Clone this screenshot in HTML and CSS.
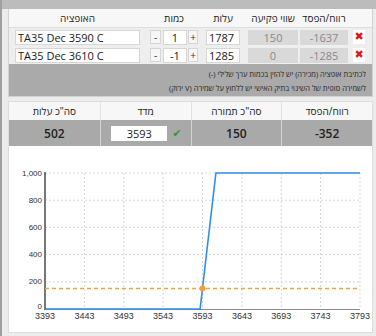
FILE: index.html
```html
<html lang="he">

<head>
    <meta charset="UTF-8">
    <meta name="viewport" content="width=device-width, initial-scale=1.0">
    <title>Options</title>
    <link rel="stylesheet" href="styles.css">
</head>

<body>
    <div class="top-strip"></div>
    <div class="options" dir="rtl">
        <div class="row head">
            <span class="c-del"></span>
            <span class="c-pl">רווח/הפסד</span>
            <span class="c-exp">שווי פקיעה</span>
            <span class="c-cost">עלות</span>
            <span class="c-qty">כמות</span>
            <span class="c-opt">האופציה</span>
        </div>
        <div class="row">
            <button class="c-del del">&#10006;</button>
            <span class="c-pl box" dir="ltr">-1637</span>
            <span class="c-exp box" dir="ltr">150</span>
            <input class="c-cost inp" type="text" value="1787" dir="ltr">
            <span class="c-qty qty">
                <button class="pm">+</button>
                <input class="inp num" type="text" value="1" dir="ltr">
                <button class="pm">-</button>
            </span>
            <input class="c-opt inp" type="text" value="TA35 Dec 3590 C" dir="ltr">
        </div>
        <div class="row">
            <button class="c-del del">&#10006;</button>
            <span class="c-pl box" dir="ltr">-1285</span>
            <span class="c-exp box" dir="ltr">0</span>
            <input class="c-cost inp" type="text" value="1285" dir="ltr">
            <span class="c-qty qty">
                <button class="pm">+</button>
                <input class="inp num" type="text" value="-1" dir="ltr">
                <button class="pm">-</button>
            </span>
            <input class="c-opt inp" type="text" value="TA35 Dec 3610 C" dir="ltr">
        </div>
        <div class="notes">
            <p>לכתיבת אופציה (מכירה) יש להזין בכמות ערך שלילי (-)</p>
            <p>לשמירה סופית של השינוי בתיק האישי יש ללחוץ על שמירה (V ירוק)</p>
        </div>
    </div>

    <div class="summary">
        <div class="sum-table" dir="rtl">
            <div class="sum-head">רווח/הפסד</div>
            <div class="sum-head">סה"כ תמורה</div>
            <div class="sum-head">מדד</div>
            <div class="sum-head">סה"כ עלות</div>
            <div class="sum-val" dir="ltr">-352</div>
            <div class="sum-val">150</div>
            <div class="sum-val index">
                <span class="check">&#10004;</span>
                <input class="idx-inp" type="text" value="3593" dir="ltr">
            </div>
            <div class="sum-val">502</div>
        </div>

        <svg class="chart" width="363" height="182" viewBox="0 0 363 182">
            <g class="grid">
                <line x1="36" y1="23" x2="351" y2="23" />
                <line x1="36" y1="50.2" x2="351" y2="50.2" />
                <line x1="36" y1="77.4" x2="351" y2="77.4" />
                <line x1="36" y1="104.6" x2="351" y2="104.6" />
                <line x1="36" y1="131.8" x2="351" y2="131.8" />
                <line x1="75.4" y1="23" x2="75.4" y2="159" />
                <line x1="114.8" y1="23" x2="114.8" y2="159" />
                <line x1="154.1" y1="23" x2="154.1" y2="159" />
                <line x1="193.5" y1="23" x2="193.5" y2="159" />
                <line x1="232.9" y1="23" x2="232.9" y2="159" />
                <line x1="272.3" y1="23" x2="272.3" y2="159" />
                <line x1="311.6" y1="23" x2="311.6" y2="159" />
                <line x1="351" y1="23" x2="351" y2="159" />
            </g>
            <line class="axis" x1="36" y1="159.5" x2="351" y2="159.5" />
            <line class="axis-y" x1="36" y1="22" x2="36" y2="160" />

            <g class="ylab">
                <text x="33" y="26">1,000</text>
                <text x="33" y="53">800</text>
                <text x="33" y="80">600</text>
                <text x="33" y="107">400</text>
                <text x="33" y="134">200</text>
                <text x="33" y="159">0</text>
            </g>
            <g class="xlab">
                <text x="36" y="169">3393</text>
                <text x="75.4" y="169">3443</text>
                <text x="114.8" y="169">3493</text>
                <text x="154.1" y="169">3543</text>
                <text x="193.5" y="169">3593</text>
                <text x="232.9" y="169">3643</text>
                <text x="272.3" y="169">3693</text>
                <text x="311.6" y="169">3743</text>
                <text x="351" y="169">3793</text>
            </g>

            <line class="cost-line" x1="36" y1="138.6" x2="351" y2="138.6" />
            <polyline class="payoff" points="36,159 191.1,159 206.9,23 351,23" />
            <circle class="dot" cx="193.5" cy="138.6" r="3" />
        </svg>
    </div>
</body>

</html>
```

FILE: styles.css
```css
* {
    padding: 0;
    margin: 0;
    box-sizing: border-box;
}

body {
    font-family: 'Open Sans', 'Liberation Sans', sans-serif;
    font-size: 11px;
    color: #333;
    background-color: #ececec;
    border-left: 2px solid #9f9f9f;
    width: 376px;
    height: 336px;
    overflow: hidden;
}

.top-strip {
    height: 9px;
    background-color: #bcbcbc;
}

.options {
    margin-left: 6px;
    width: 365px;
    border: 1px solid #d2d2d2;
    border-top: none;
    background-color: #eeeeee;
}

.row {
    display: flex;
    align-items: center;
    height: 18px;
}

.row.head {
    height: 19px;
    background-color: #f7f7f7;
    border-bottom: 1px solid #dedede;
    color: #222;
    font-size: 10px;
}

.head span {
    text-align: center;
}

/* column sizes, right to left */
.c-del {
    width: 12px;
    margin-right: 7px;
}

.c-pl {
    width: 48px;
    margin-right: 5px;
}

.c-exp {
    width: 50px;
    margin-right: 2px;
}

.c-cost {
    width: 34px;
    margin-right: 8px;
}

.c-qty {
    width: 48px;
    margin-right: 8px;
}

.c-opt {
    width: 125px;
    margin-right: 10px;
}

.head .c-del {
    height: 1px;
}

.inp {
    height: 15px;
    border: 1px solid #d6d6d6;
    background-color: #fff;
    font-family: inherit;
    font-size: 11px;
    color: #1a1a1a;
    padding: 0 2px;
    outline: none;
}

.box {
    height: 15px;
    line-height: 15px;
    background-color: #d9d9d9;
    color: #8a8a8a;
    text-align: center;
    font-size: 11px;
}

.qty {
    display: flex;
    align-items: center;
}

.pm {
    width: 11px;
    height: 14px;
    border: 1px solid #d6d6d6;
    background-color: #f6f6f6;
    font-family: inherit;
    font-size: 10px;
    color: #333;
    line-height: 12px;
}

.qty .pm:first-child {
    width: 10px;
}

.qty .pm:last-child {
    margin-right: 2px;
}

.num {
    width: 24px;
    margin-right: 1px;
    text-align: center;
}

.del {
    height: 14px;
    border: none;
    background-color: #fff;
    color: #e2161b;
    font-size: 11px;
    font-weight: bold;
    line-height: 14px;
    font-family: 'DejaVu Sans', sans-serif;
}

.notes {
    background-color: #aaaaaa;
    padding: 3px 6px 1px 0;
    height: 32px;
    font-size: 7.5px;
    color: #262626;
}

.notes p {
    line-height: 14px;
}

.summary {
    margin: 4px 0 0 6px;
    width: 365px;
    height: 232px;
    background-color: #fff;
    border: 1px solid #dcdcdc;
}

.sum-table {
    display: grid;
    grid-template-columns: repeat(4, 1fr);
    grid-template-rows: 18px 26px;
}

.sum-head {
    background-color: #f7f7f7;
    border-left: 1px solid #e2e2e2;
    text-align: center;
    line-height: 18px;
    font-size: 10px;
    color: #222;
}

.sum-val {
    background-color: #a9a9a9;
    border-left: 1px solid #d4d4d4;
    display: flex;
    align-items: center;
    justify-content: center;
    font-size: 12px;
    font-weight: 600;
    color: #222;
}

.sum-head:nth-child(4),
.sum-val:last-child {
    border-left: none;
}

.sum-val.index {
    justify-content: flex-start;
    padding-right: 9px;
    gap: 5px;
}

.check {
    color: #2e9b2e;
    font-size: 11px;
    font-family: 'DejaVu Sans', sans-serif;
}

.idx-inp {
    width: 56px;
    height: 15px;
    border: none;
    background-color: #fff;
    font-family: inherit;
    font-size: 11px;
    color: #222;
    text-align: center;
    outline: none;
}

.chart {
    display: block;
    margin-top: 4px;
}

.grid line {
    stroke: #d6d6d6;
    stroke-width: 1;
    stroke-dasharray: 2 2;
}

.axis {
    stroke: #8a8a8a;
    stroke-width: 1;
}

.axis-y {
    stroke: #777;
    stroke-width: 2;
}

.ylab text {
    font-family: 'Liberation Sans', sans-serif;
    font-size: 8px;
    fill: #333;
    text-anchor: end;
}

.xlab text {
    font-family: 'Liberation Sans', sans-serif;
    font-size: 9px;
    fill: #333;
    text-anchor: middle;
}

.cost-line {
    stroke: #f0a23c;
    stroke-width: 1.5;
    stroke-dasharray: 4 3;
}

.payoff {
    fill: none;
    stroke: #2c8ef0;
    stroke-width: 1.6;
}

.dot {
    fill: #f0a23c;
}
```
